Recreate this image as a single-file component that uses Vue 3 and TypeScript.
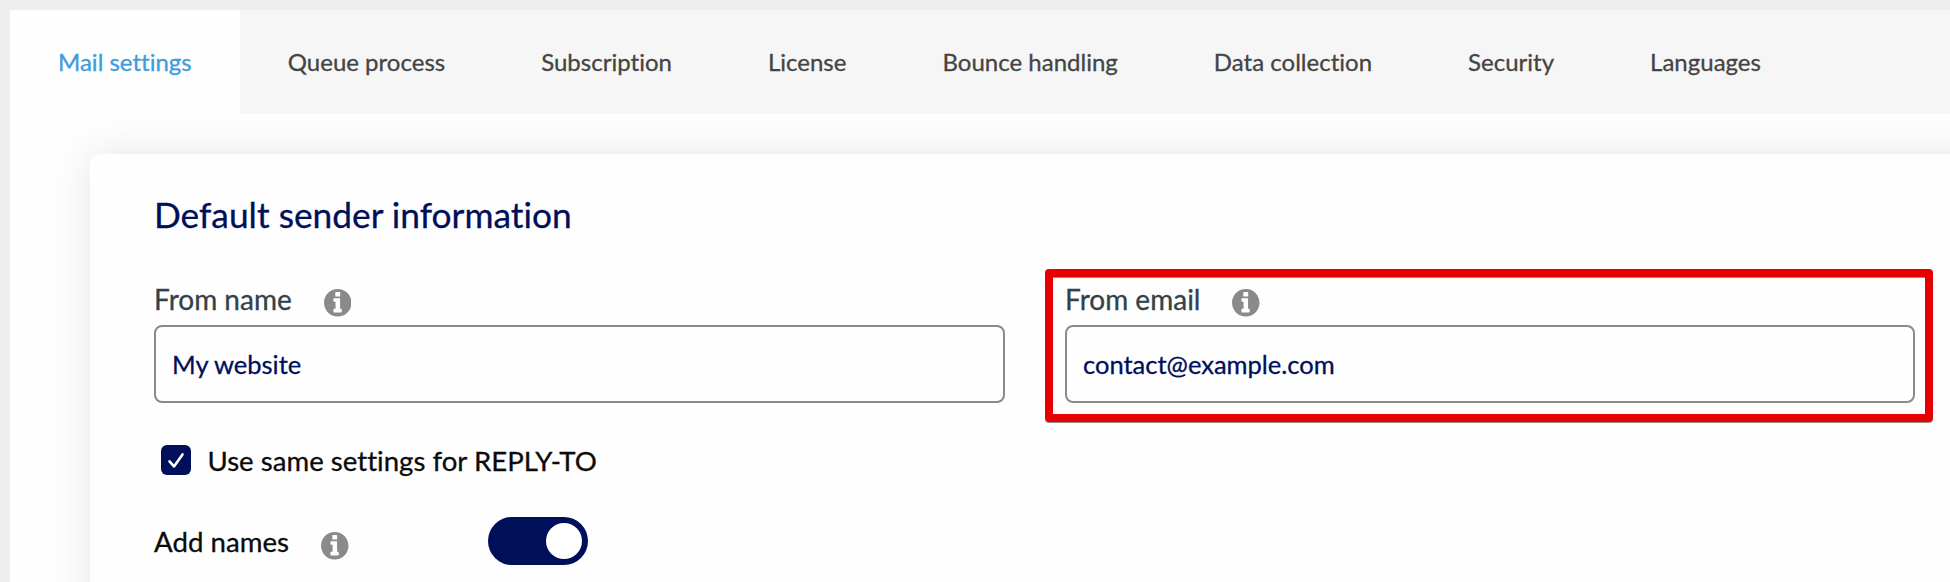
<script setup lang="ts">
import { ref } from 'vue'

const tabs: string[] = [
  'Mail settings',
  'Queue process',
  'Subscription',
  'License',
  'Bounce handling',
  'Data collection',
  'Security',
  'Languages',
]
const activeTab = ref(0)

interface Field {
  id: string
  label: string
  value: string
  highlighted: boolean
}
const fields = ref<Field[]>([
  { id: 'from-name', label: 'From name', value: 'My website', highlighted: false },
  { id: 'from-email', label: 'From email', value: 'contact@example.com', highlighted: true },
])
const sameReplyTo = ref(true)
const addNames = ref(true)

const infoPath =
  'M256 8C119 8 8 119 8 256s111 248 248 248 248-111 248-248S393 8 256 8zm-32 56h64a12 12 0 0 1 12 12v56a12 12 0 0 1-12 12h-64a12 12 0 0 1-12-12V76a12 12 0 0 1 12-12zm104 354a12 12 0 0 1-12 12H190a12 12 0 0 1-12-12v-40a12 12 0 0 1 12-12h26V236h-26a12 12 0 0 1-12-12v-38a12 12 0 0 1 12-12h96a12 12 0 0 1 12 12v180h18a12 12 0 0 1 12 12z'
</script>

<template>
  <div class="screen">
    <main class="page">
      <nav class="tabs">
        <button
          v-for="(tab, i) in tabs"
          :key="tab"
          class="tab"
          :class="{ active: i === activeTab }"
          type="button"
          @click="activeTab = i"
        >{{ tab }}</button>
      </nav>

      <section class="card">
        <h2 class="title">Default sender information</h2>

        <div class="fields">
          <div v-for="field in fields" :key="field.id" class="field">
            <div class="field-head">
              <label :for="field.id">{{ field.label }}</label>
              <svg class="info" viewBox="8 8 496 496"><path :d="infoPath" /></svg>
            </div>
            <input :id="field.id" v-model="field.value" class="input" type="text" />
            <span v-if="field.highlighted" class="highlight"></span>
          </div>
        </div>

        <label class="check-row">
          <input v-model="sameReplyTo" class="sr" type="checkbox" />
          <span class="check">
            <svg v-if="sameReplyTo" viewBox="0 0 30 30"><path d="M8.5 16.3 13 21.4 21.5 9.4" /></svg>
          </span>
          <span class="check-text">Use same settings for REPLY-TO</span>
        </label>

        <div class="toggle-row">
          <div class="toggle-label">
            <span>Add names</span>
            <svg class="info" viewBox="8 8 496 496"><path :d="infoPath" /></svg>
          </div>
          <button
            class="toggle"
            :class="{ on: addNames }"
            type="button"
            role="switch"
            :aria-checked="addNames"
            @click="addNames = !addNames"
          ><span class="knob"></span></button>
        </div>
      </section>
    </main>
  </div>
</template>

<style>
body {
  margin: 0;
  overflow: hidden;
}
</style>

<style scoped>
.screen {
  box-sizing: border-box;
  width: 1950px;
  height: 582px;
  padding: 10px 0 0 10px;
  overflow: hidden;
  background: #eeeeee;
  font-family: Lato, 'Liberation Sans', sans-serif;
  letter-spacing: 0.01px;
  font-variant-ligatures: none;
  -webkit-text-stroke: 0.3px currentColor;
}
.page {
  height: 572px;
  overflow: hidden;
  background: #fefefe;
}
.tabs {
  display: flex;
  height: 104px;
  background: #f6f6f6;
}
.tab {
  flex: none;
  margin: 0;
  padding: 0 48px 1px;
  border: 0;
  background: transparent;
  color: #444444;
  font: 400 24px/30px Lato, 'Liberation Sans', sans-serif;
  font-variant-ligatures: none;
  letter-spacing: 0.01px;
  white-space: nowrap;
}
.tab.active {
  background: #fefefe;
  color: #3d9cdc;
}
.card {
  box-sizing: border-box;
  width: 1940px;
  height: 600px;
  margin: 40px 0 0 80px;
  padding: 39px 0 0 64px;
  border-radius: 10px;
  background: #fefefe;
  box-shadow: 0 0 40px rgba(0, 0, 0, 0.1);
}
.title {
  margin: 0;
  color: #000f5a;
  font-size: 35.3px;
  font-weight: 400;
  line-height: 44px;
}
.fields {
  display: flex;
  gap: 60px;
  margin-top: 40px;
}
.field {
  position: relative;
  width: 850px;
}
.field:first-child {
  width: 851px;
}
.field-head {
  display: flex;
  align-items: flex-start;
  gap: 32px;
  height: 48px;
  color: #32414a;
  font-size: 28px;
  line-height: 44px;
}
.info {
  width: 27.5px;
  height: 27.5px;
  margin-top: 12px;
  fill: #8a8a8a;
  stroke: none;
}
.input {
  display: block;
  box-sizing: border-box;
  width: 100%;
  height: 78px;
  padding: 0 16px;
  border: 2px solid #8a8a8a;
  border-radius: 8px;
  outline: 0;
  background: #fefefe;
  color: #000f5a;
  font: 400 25.5px/32px Lato, 'Liberation Sans', sans-serif;
  font-variant-ligatures: none;
}
.highlight {
  position: absolute;
  inset: -8px -18px -19px -20px;
  box-sizing: border-box;
  border: 8px solid #e60000;
  border-radius: 4px;
  box-shadow: 0 1px 0 #8f8f8f, inset 0 1px 0 #8f8f8f;
  pointer-events: none;
}
.check-row {
  display: flex;
  align-items: center;
  gap: 16.5px;
  height: 40px;
  margin: 37px 0 0 7px;
  color: #0b0b0b;
  font-size: 27.6px;
}
.sr {
  position: absolute;
  opacity: 0;
  pointer-events: none;
}
.check {
  width: 30px;
  height: 30px;
  border-radius: 6px;
  background: #000f5a;
}
.check svg {
  display: block;
  fill: none;
  stroke: #ffffff;
  stroke-width: 2.6;
  stroke-linecap: round;
  stroke-linejoin: round;
}
.toggle-row {
  display: flex;
  align-items: center;
  height: 48px;
  margin-top: 37px;
}
.toggle-label {
  display: flex;
  gap: 32px;
  width: 334px;
  height: 54px;
  color: #0b0b0b;
  font-size: 27.65px;
  line-height: 56px;
}
.toggle-label .info {
  margin-top: 18px;
}
.toggle {
  display: flex;
  align-items: center;
  width: 100px;
  height: 48px;
  padding: 0 6px;
  border: 0;
  border-radius: 24px;
  background: #8a8a8a;
}
.toggle.on {
  justify-content: flex-end;
  background: #000f5a;
}
.knob {
  width: 36px;
  height: 36px;
  border-radius: 50%;
  background: #ffffff;
}
</style>
